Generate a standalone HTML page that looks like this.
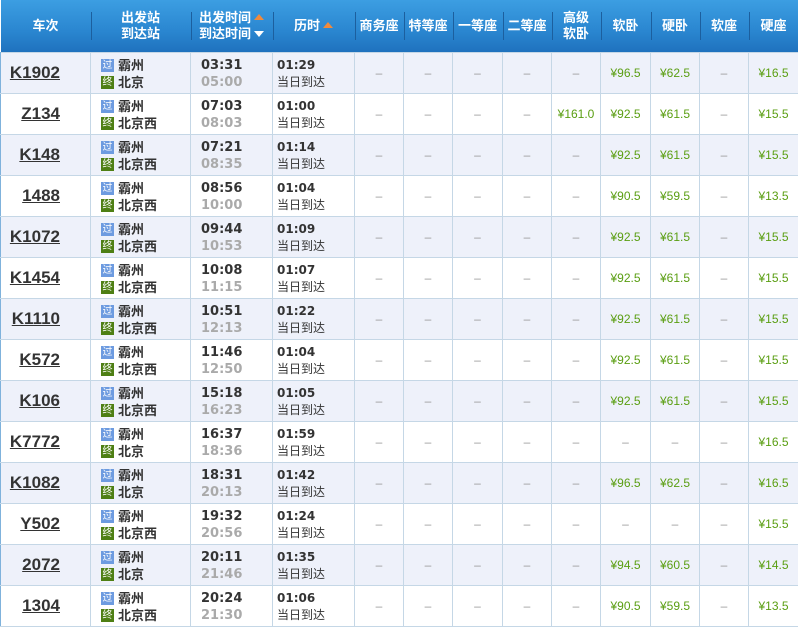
<!DOCTYPE html><html><head><meta charset="utf-8"><style>
*{margin:0;padding:0;box-sizing:border-box}
body{width:798px;height:626px;overflow:hidden;background:#fff;font-family:"Liberation Sans","Noto Sans CJK SC",sans-serif;}
table{border-collapse:collapse;table-layout:fixed;width:798px}
th{height:52px;background:linear-gradient(#3c9ee2,#2a86d0 60%,#1f72be);color:#fff;font-size:13px;font-weight:bold;line-height:16px;position:relative;text-align:center}
th+th:before{content:"";position:absolute;left:0;top:12px;height:28px;border-left:1px solid #1c5f9e}
td{height:41px;border:1px solid #c5d7e6;text-align:center;font-size:12px;color:#999;vertical-align:middle;overflow:hidden}
tr:nth-child(odd) td{background:#eef1fa}
td.n{font-family:"Liberation Sans",sans-serif;font-weight:bold;font-size:17px;color:#333;text-decoration:underline;border-left:1px solid #7fb2dc;text-align:right;padding-right:30px}
td.s{text-align:left;padding-left:10px;font-size:13px;font-weight:bold;color:#333;line-height:17px;padding-top:2px}
td.t{text-align:left;padding-left:10px;font-family:"DejaVu Sans",sans-serif;font-size:13px;font-weight:bold;color:#333;line-height:17px;padding-top:2px}
td.t span{color:#aaa}
td.d{text-align:left;padding-left:4px;font-size:12px;color:#333;line-height:17px;padding-top:2px}
td.d b{font-family:"DejaVu Sans",sans-serif;font-weight:bold}
.p{color:#5a9e12}
.ic{display:inline-block;width:13px;height:13px;font-size:10px;line-height:13px;text-align:center;color:#fff;vertical-align:middle;margin-right:4px;font-weight:normal;position:relative;top:-1px}
.g{background:#6d9be0}.j{background:#4e7f14}
.up{display:inline-block;border:5px solid transparent;border-bottom:6px solid #f08a3c;border-top:none;vertical-align:2px;margin-left:3px}
.dn{display:inline-block;border:5px solid transparent;border-top:6px solid #fff;border-bottom:none;vertical-align:1px;margin-left:3px}
</style></head><body>
<table>
<colgroup><col style="width:90px"><col style="width:100px"><col style="width:82px"><col style="width:82px"><col style="width:49px"><col style="width:49px"><col style="width:50px"><col style="width:49px"><col style="width:49px"><col style="width:50px"><col style="width:49px"><col style="width:49px"><col style="width:50px"></colgroup>
<thead><tr><th>车次</th><th>出发站<br>到达站</th><th>出发时间<span class="up"></span><br>到达时间<span class="dn"></span></th><th>历时<span class="up"></span></th><th>商务座</th><th>特等座</th><th>一等座</th><th>二等座</th><th>高级<br>软卧</th><th>软卧</th><th>硬卧</th><th>软座</th><th>硬座</th></tr></thead>
<tbody id="b"></tbody>
</table>
<script>
var d=[["K1902","北京","03:31","05:00","01:29","","¥96.5","¥62.5","¥16.5"],
["Z134","北京西","07:03","08:03","01:00","¥161.0","¥92.5","¥61.5","¥15.5"],
["K148","北京西","07:21","08:35","01:14","","¥92.5","¥61.5","¥15.5"],
["1488","北京西","08:56","10:00","01:04","","¥90.5","¥59.5","¥13.5"],
["K1072","北京西","09:44","10:53","01:09","","¥92.5","¥61.5","¥15.5"],
["K1454","北京西","10:08","11:15","01:07","","¥92.5","¥61.5","¥15.5"],
["K1110","北京西","10:51","12:13","01:22","","¥92.5","¥61.5","¥15.5"],
["K572","北京西","11:46","12:50","01:04","","¥92.5","¥61.5","¥15.5"],
["K106","北京西","15:18","16:23","01:05","","¥92.5","¥61.5","¥15.5"],
["K7772","北京","16:37","18:36","01:59","","","","¥16.5"],
["K1082","北京","18:31","20:13","01:42","","¥96.5","¥62.5","¥16.5"],
["Y502","北京西","19:32","20:56","01:24","","","","¥15.5"],
["2072","北京","20:11","21:46","01:35","","¥94.5","¥60.5","¥14.5"],
["1304","北京西","20:24","21:30","01:06","","¥90.5","¥59.5","¥13.5"]];
function c(v){return v?'<td class="p">'+v+'</td>':'<td>–</td>'}
var h='';d.forEach(function(r){h+='<tr><td class="n">'+r[0]+'</td><td class="s"><span class="ic g">过</span>霸州<br><span class="ic j">终</span>'+r[1]+'</td><td class="t">'+r[2]+'<br><span>'+r[3]+'</span></td><td class="d"><b>'+r[4]+'</b><br>当日到达</td><td>–</td><td>–</td><td>–</td><td>–</td>'+c(r[5])+c(r[6])+c(r[7])+'<td>–</td>'+c(r[8])+'</tr>'});
document.getElementById('b').innerHTML=h;
</script>
</body></html>
